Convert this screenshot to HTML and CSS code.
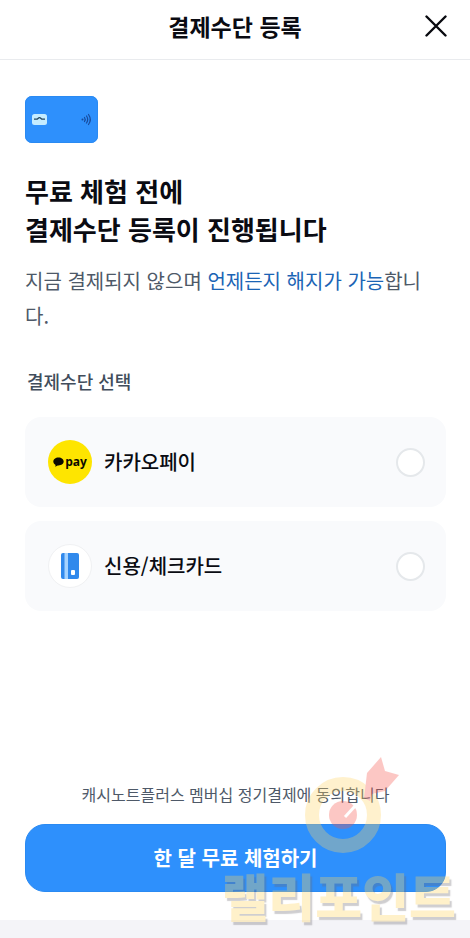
FILE: index.html
```html
<!DOCTYPE html>
<html lang="ko">
<head>
<meta charset="utf-8">
<meta name="viewport" content="width=device-width, initial-scale=1">
<title>결제수단 등록</title>
<link rel="stylesheet" href="styles.css">
</head>
<body>
<div class="page">
  <header class="topbar">
    <h1 class="topbar-title">결제수단 등록</h1>
    <button class="close" type="button" aria-label="닫기">
      <svg width="22" height="22" viewBox="0 0 22 22" fill="none" stroke="#08090f" stroke-width="2.4" stroke-linecap="round"><path d="M1.5 1.5 20.5 20.5M20.5 1.5 1.5 20.5"/></svg>
    </button>
  </header>

  <form class="content">
    <svg class="hero-card" width="73" height="47" viewBox="0 0 73 47" aria-hidden="true">
      <rect width="73" height="47" rx="7" fill="#2e90fc"/>
      <rect x=".5" y=".5" width="72" height="46" rx="6.5" fill="none" stroke="#2a8af2"/>
      <rect x="7" y="18" width="15" height="11" rx="2.5" fill="#c5ecff"/>
      <path d="M9 23.200h2.500c1.500 0 1.500-1.500 3-1.500s1.500 1.500 3 1.500H20" fill="none" stroke="#24465f" stroke-width="1.300"/>
      <g fill="none" stroke="#174a9c" stroke-width="1.2" stroke-linecap="round">
        <path d="M59.500 21.500q1.400 2 0 4M61.500 20q2.400 3.500 0 7M63.500 18.500q3.600 5 0 10"/>
      </g>
      <circle cx="57.500" cy="23.500" r="1" fill="#174a9c"/>
    </svg>

    <h2 class="headline">무료 체험 전에<br>결제수단 등록이 진행됩니다</h2>
    <p class="lead">지금 결제되지 않으며 <em class="accent">언제든지 해지가 가능</em>합니<br>다.</p>

    <fieldset class="methods">
      <legend class="methods-label">결제수단 선택</legend>
      <div class="options">
        <label class="option" for="kakao">
          <span class="logo logo-kakao">
            <svg width="11" height="10" viewBox="0 0 11 10" aria-hidden="true"><path d="M5.500.5C2.500.5.300 2.200.300 4.500c0 1.500.9 2.700 2.300 3.400L2.200 9.700 4.700 8.400h.8c3 0 5.200-1.700 5.200-3.900S8.500.5 5.500.5Z" fill="#0c0a00"/></svg>
            <span>pay</span>
          </span>
          <span class="option-name">카카오페이</span>
          <input class="radio" type="radio" name="method" id="kakao">
        </label>
        <label class="option" for="card">
          <span class="logo logo-card">
            <svg width="18" height="26" viewBox="0 0 18 26" aria-hidden="true">
              <rect width="18" height="26" rx="2" fill="#3089ec"/>
              <rect x="3.500" width="3.500" height="26" fill="#a5d3ff"/>
              <rect x="10" y="17" width="4" height="5" rx="1" fill="#fff"/>
            </svg>
          </span>
          <span class="option-name">신용/체크카드</span>
          <input class="radio" type="radio" name="method" id="card">
        </label>
      </div>
    </fieldset>

    <div class="actions">
      <p class="consent">캐시노트플러스 멤버십 정기결제에 동의합니다</p>
      <button class="submit" type="submit">한 달 무료 체험하기</button>
    </div>
  </form>
  <div class="home-strip"></div>

  <div class="watermark" aria-hidden="true">
    <svg class="watermark-target" width="94" height="98" viewBox="0 0 94 98">
      <circle cx="38" cy="58" r="31" fill="none" stroke="#ffd667" stroke-width="14"/>
      <circle cx="38" cy="58" r="14" fill="#f8554c"/>
      <path d="M60 33 62 16 76 0 80 14 94 18 80 34 67 37 65 44 59 41Z" fill="#f8554c"/>
      <path d="M40 60 51 48" stroke="#fff" stroke-width="3"/>
    </svg>
    <span class="watermark-name">랠리포인트</span>
  </div>
</div>
</body>
</html>
```
FILE: styles.css
```css
* {
  box-sizing: border-box;
}

body {
  margin: 0;
  background: #fff;
  color: #0a0b12;
  font-family: "Noto Sans CJK KR", sans-serif;
}

h1, h2, p {
  margin: 0;
}

button, input {
  font: inherit;
}

.page {
  position: relative;
  display: flex;
  flex-direction: column;
  min-height: 100vh;
  overflow: hidden;
}

.topbar {
  display: grid;
  grid-template-columns: 48px 1fr 48px;
  align-items: center;
  height: 60px;
  padding: 0 10px 7px;
  border-bottom: 1px solid #e9ebee;
}

.topbar-title {
  grid-column: 2;
  font-size: 23px;
  font-weight: 700;
  line-height: 32px;
  text-align: center;
}

.close {
  display: grid;
  place-items: center;
  height: 48px;
  padding: 0;
  border: 0;
  background: none;
}

.content {
  display: flex;
  flex: 1;
  flex-direction: column;
  padding: 36px 24px 28px 25px;
}

.hero-card {
  display: block;
}

.headline {
  margin-top: 29px;
  font-size: 26px;
  font-weight: 700;
  line-height: 38px;
}

.lead {
  margin-top: 15px;
  color: #4e5968;
  font-size: 20px;
  line-height: 35px;
}

.accent {
  color: #1b64b5;
  font-style: normal;
}

.methods {
  min-width: 0;
  margin: 35px 0 0;
  padding: 0;
  border: 0;
}

.methods-label {
  padding: 0 2px;
  color: #414d5c;
  font-size: 18px;
  font-weight: 500;
  line-height: 26px;
}

.options {
  display: grid;
  gap: 14px;
  margin-top: 23px;
}

.option {
  display: flex;
  align-items: center;
  gap: 12px;
  height: 90px;
  padding: 0 21px 0 23px;
  border-radius: 16px;
  background: #f9fafc;
}

.logo {
  display: flex;
  align-items: center;
  justify-content: center;
  width: 44px;
  height: 44px;
  border-radius: 50%;
}

.logo-kakao {
  gap: 1px;
  background: #fee500;
  color: #0c0a00;
  font: 700 12px/16px "Open Sans", sans-serif;
}

.logo-card {
  border: 1px solid #f0f1f3;
  background: #fff;
}

.option-name {
  flex: 1;
  font-size: 20px;
  font-weight: 500;
  line-height: 30px;
}

.radio {
  appearance: none;
  width: 29px;
  height: 29px;
  margin: 0;
  border: 2px solid #e5e8eb;
  border-radius: 50%;
  background: #fff;
}

.radio:checked {
  border: 8px solid #2e90fc;
}

.actions {
  margin-top: auto;
  text-align: center;
}

.consent {
  color: #4e5968;
  font-size: 16px;
  line-height: 24px;
}

.submit {
  width: 100%;
  height: 68px;
  margin-top: 18px;
  padding: 0 0 2px;
  border: 1px solid #2a8af2;
  border-radius: 20px;
  background: #2e90fc;
  color: #fff;
  font-size: 20px;
  font-weight: 700;
}

.home-strip {
  height: 18px;
  background: #f4f4f8;
}

.watermark {
  position: absolute;
  right: 14px;
  bottom: 17px;
  display: flex;
  flex-direction: column;
  align-items: center;
  opacity: 0.32;
  pointer-events: none;
}

.watermark-target {
  margin-left: 26px;
}

.watermark-name {
  margin-top: 14px;
  color: #ffd45e;
  font-size: 51px;
  font-weight: 900;
  line-height: 52px;
  text-shadow: 2px 3px 1px #6d6a70;
}
```
